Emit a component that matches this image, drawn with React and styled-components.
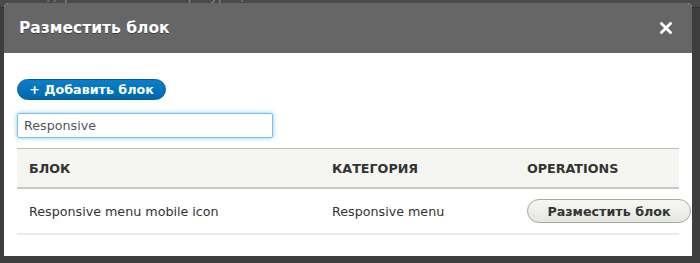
import React from "react";
import styled, { createGlobalStyle } from "styled-components";

const Global = createGlobalStyle`
  html, body { margin: 0; padding: 0; }
  body {
    width: 700px; height: 263px; overflow: hidden;
    background: #3d3d3d;
    font-family: "DejaVu Sans", Verdana, sans-serif;
  }
`;

const Page = styled.div`
  position: relative;
  width: 700px;
  height: 263px;
  background: #3e3e3e;
`;

const Toolbar = styled.div`
  display: flex;
  align-items: center;
  height: 22px;
  padding-left: 30px;
  gap: 40px;
  background: #4a4a4a;
  border-bottom: 1px solid #333;
  color: #8a8a8a;
  font-size: 13px;
  line-height: 22px;
  transform: translateY(-15px);
`;

const ToolItem = styled.span`
  white-space: nowrap;
`;

const Dialog = styled.div`
  position: absolute;
  left: 4px;
  top: 3px;
  width: 688px;
  height: 253px;
  background: #fff;
  border-radius: 5px 5px 0 0;
  overflow: hidden;
  display: flex;
  flex-direction: column;
`;

const Header = styled.div`
  display: flex;
  align-items: center;
  justify-content: space-between;
  height: 50px;
  padding: 0 20px 0 15px;
  background: #666;
  flex: none;
`;

const Title = styled.h1`
  margin: 0;
  color: #fff;
  font-size: 15.5px;
  font-weight: bold;
  text-shadow: 0 1px 0 rgba(0,0,0,0.4);
`;

const Close = styled.button`
  border: 0;
  background: none;
  padding: 0;
  width: 12px;
  height: 12px;
  display: flex;
  cursor: pointer;
`;

const Body = styled.div`
  padding: 26px 0 0 13px;
  display: flex;
  flex-direction: column;
  align-items: flex-start;
`;

const AddButton = styled.button`
  box-sizing: border-box;
  height: 21px;
  width: 149px;
  padding: 0;
  border: 1px solid #0b5a96;
  border-radius: 11px;
  background: linear-gradient(#0a7fc9, #0068ac);
  color: #fff;
  font-family: "DejaVu Sans", Verdana, sans-serif;
  font-size: 12.7px;
  font-weight: bold;
  line-height: 19px;
  white-space: nowrap;
`;

const Search = styled.input`
  margin-top: 13px;
  box-sizing: border-box;
  width: 256px;
  height: 25px;
  padding: 0 6px;
  border: 1px solid #7dc0ea;
  border-radius: 2px;
  box-shadow: 0 0 4px rgba(90, 180, 240, 0.75);
  color: #555;
  font-family: "DejaVu Sans", Verdana, sans-serif;
  font-size: 12.7px;
  outline: none;
`;

const Table = styled.table`
  margin-top: 10px;
  width: 662px;
  table-layout: fixed;
  border-collapse: collapse;
  font-size: 12.7px;
`;

const Col = styled.col`
  width: ${(p) => p.$w}px;
`;

const HeadRow = styled.tr`
  background: #f5f5f2;
  border-top: 1px solid #bfbfba;
  border-bottom: 2px solid #c8c8c4;
`;

const Th = styled.th`
  height: 38px;
  padding: 0 12px;
  text-align: left;
  color: #333;
  font-size: 12.7px;
  font-weight: bold;
  text-transform: uppercase;
  white-space: nowrap;
`;

const Row = styled.tr`
  border-bottom: 2px solid #ebebe8;
`;

const Td = styled.td`
  height: 44px;
  padding: 0 12px;
  color: #333;
  white-space: nowrap;
  overflow: visible;
`;

const PlaceButton = styled.button`
  box-sizing: border-box;
  height: 24px;
  width: 164px;
  padding: 0;
  border: 1px solid #a8a8a3;
  border-radius: 12px;
  background: linear-gradient(#f6f6f3, #e6e6e1);
  color: #333;
  font-family: "DejaVu Sans", Verdana, sans-serif;
  font-size: 12.7px;
  font-weight: bold;
  white-space: nowrap;
`;

export default function App() {
  return (
    <Page>
      <Global />
      <Toolbar>
        <ToolItem>Содержимое</ToolItem>
        <ToolItem>Конфигурация</ToolItem>
        <ToolItem>Пользователи</ToolItem>
        <ToolItem>Отчёты</ToolItem>
      </Toolbar>
      <Dialog>
        <Header>
          <Title>Разместить блок</Title>
          <Close aria-label="Закрыть">
            <svg width="12" height="12" viewBox="0 0 12 12">
              <path d="M1.5 1.5 L10.5 10.5 M10.5 1.5 L1.5 10.5" stroke="#fff" strokeWidth="2.8" strokeLinecap="square" />
            </svg>
          </Close>
        </Header>
        <Body>
          <AddButton>+ Добавить блок</AddButton>
          <Search defaultValue="Responsive" />
          <Table>
            <colgroup>
              <Col $w={303} />
              <Col $w={195} />
              <Col $w={164} />
            </colgroup>
            <thead>
              <HeadRow>
                <Th>Блок</Th>
                <Th>Категория</Th>
                <Th>Operations</Th>
              </HeadRow>
            </thead>
            <tbody>
              <Row>
                <Td>Responsive menu mobile icon</Td>
                <Td>Responsive menu</Td>
                <Td>
                  <PlaceButton>Разместить блок</PlaceButton>
                </Td>
              </Row>
            </tbody>
          </Table>
        </Body>
      </Dialog>
    </Page>
  );
}
